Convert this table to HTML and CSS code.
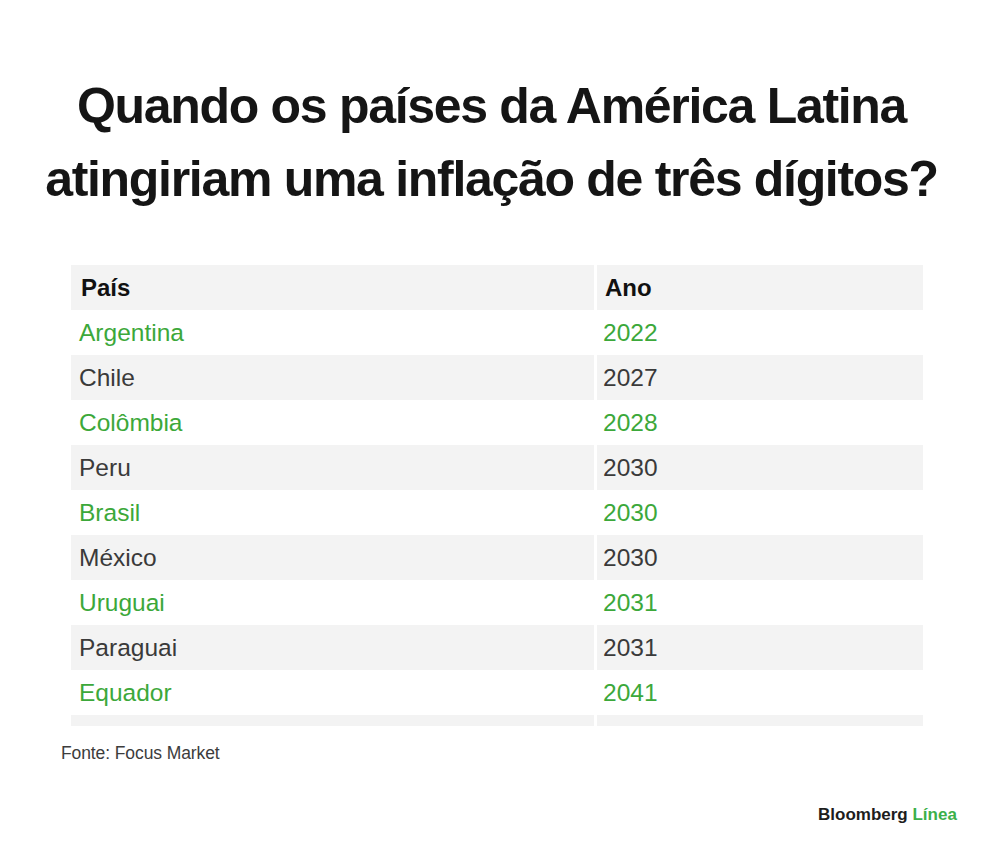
FILE: index.html
```html
<!DOCTYPE html>
<html lang="pt">
<head>
<meta charset="utf-8">
<title>Inflação de três dígitos</title>
<link rel="stylesheet" href="styles.css">
</head>
<body>
<main class="page">
  <h1 class="title">Quando os países da América Latina<br>atingiriam uma inflação de três dígitos?</h1>
  <div class="table">
    <div class="row head"><div class="cell">País</div><div class="cell">Ano</div></div>
    <div class="row green"><div class="cell">Argentina</div><div class="cell">2022</div></div>
    <div class="row gray"><div class="cell">Chile</div><div class="cell">2027</div></div>
    <div class="row green"><div class="cell">Colômbia</div><div class="cell">2028</div></div>
    <div class="row gray"><div class="cell">Peru</div><div class="cell">2030</div></div>
    <div class="row green"><div class="cell">Brasil</div><div class="cell">2030</div></div>
    <div class="row gray"><div class="cell">México</div><div class="cell">2030</div></div>
    <div class="row green"><div class="cell">Uruguai</div><div class="cell">2031</div></div>
    <div class="row gray"><div class="cell">Paraguai</div><div class="cell">2031</div></div>
    <div class="row green"><div class="cell">Equador</div><div class="cell">2041</div></div>
    <div class="row gray partial"><div class="cell"></div><div class="cell"></div></div>
  </div>
  <p class="source">Fonte: Focus Market</p>
  <div class="brand"><span class="b1">Bloomberg</span> <span class="b2">Línea</span></div>
</main>
</body>
</html>
```
FILE: styles.css
```css
html, body {
  margin: 0;
  padding: 0;
  background: #ffffff;
}
.page {
  width: 1000px;
  height: 857px;
  font-family: "Liberation Sans", Arial, sans-serif;
  position: relative;
  box-sizing: border-box;
  padding-top: 70px;
}
.title {
  margin: 0;
  padding-right: 17px;
  text-align: center;
  font-size: 50px;
  line-height: 73px;
  font-weight: 700;
  letter-spacing: -1.3px;
  color: #151515;
}
.table {
  margin: 49px 0 0 71px;
  width: 853px;
}
.row {
  display: grid;
  grid-template-columns: 523px 326px;
  column-gap: 3px;
  height: 45px;
}
.cell {
  display: flex;
  align-items: center;
  padding-left: 8px;
  font-size: 24.5px;
}
.row .cell:nth-child(2) {
  padding-left: 6px;
}
.head .cell, .gray .cell {
  background: #f3f3f3;
}
.head .cell {
  font-weight: 700;
  color: #111111;
  font-size: 24px;
  padding-left: 10px;
}
.head .cell:nth-child(2) {
  padding-left: 8px;
}
.green .cell {
  color: #3ca83a;
  background: #ffffff;
}
.gray .cell {
  color: #3a3a3a;
}
.row.partial {
  height: 11px;
}
.source {
  margin: 17px 0 0 61px;
  font-size: 17.5px;
  color: #3c3c3c;
  letter-spacing: -0.1px;
}
.brand {
  position: absolute;
  left: 818px;
  top: 805px;
  font-size: 17px;
  font-weight: 700;
  letter-spacing: 0px;
}
.b1 { color: #1d1d1d; }
.b2 { color: #3cb04a; }
```
